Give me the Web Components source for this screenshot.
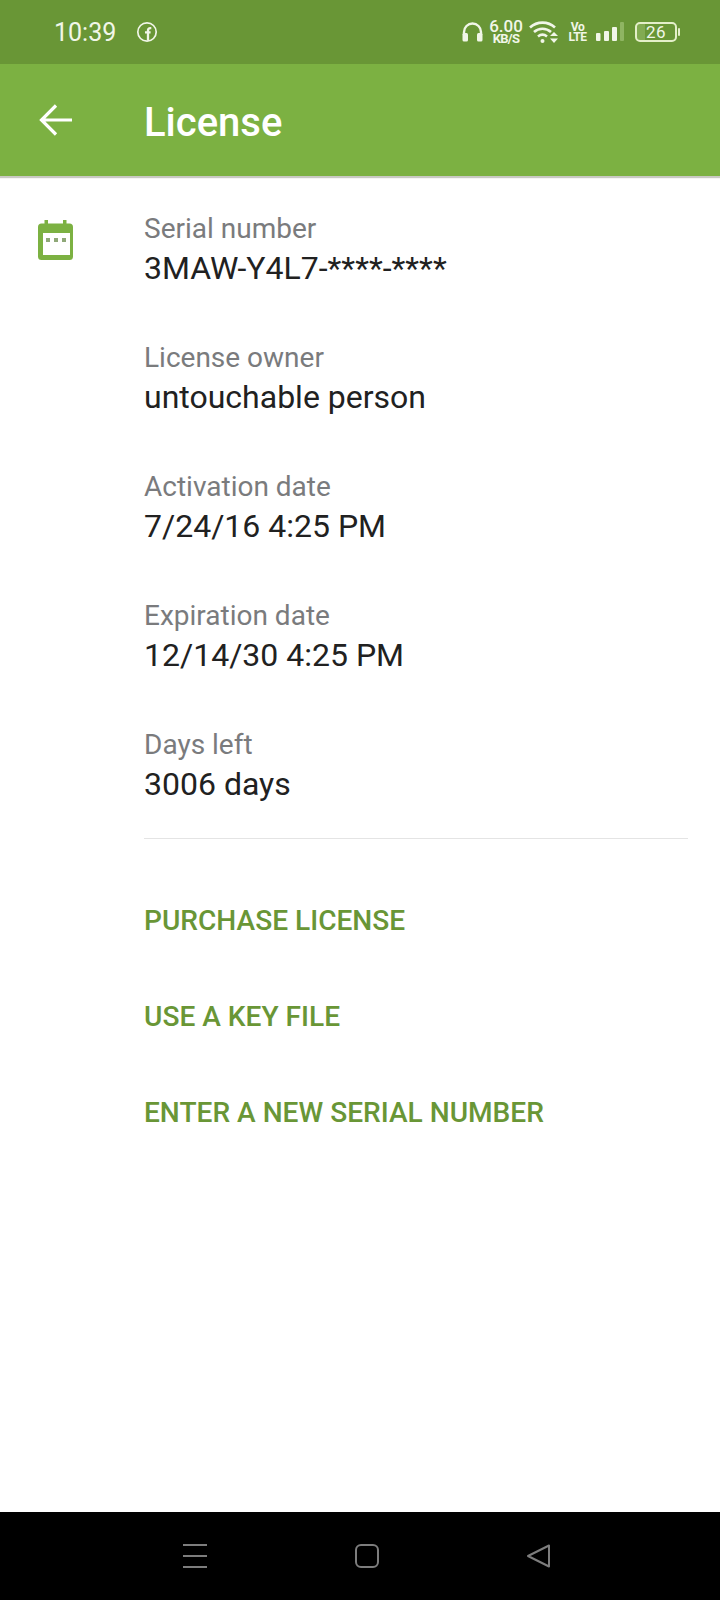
<!DOCTYPE html>
<html>
<head>
<meta charset="utf-8">
<style>
  html, body { margin: 0; padding: 0; background: #fff; }
  body { width: 720px; height: 1600px; font-family: Roboto, "Noto Sans", sans-serif; display: flex; flex-direction: column; overflow: hidden; }
</style>
</head>
<body>
<status-bar></status-bar>
<app-bar title="License"></app-bar>
<license-panel>
  <license-row label="Serial number" value="3MAW-Y4L7-****-****"></license-row>
  <license-row label="License owner" value="untouchable person"></license-row>
  <license-row label="Activation date" value="7/24/16 4:25 PM"></license-row>
  <license-row label="Expiration date" value="12/14/30 4:25 PM"></license-row>
  <license-row label="Days left" value="3006 days"></license-row>
  <action-link slot="actions">PURCHASE LICENSE</action-link>
  <action-link slot="actions">USE A KEY FILE</action-link>
  <action-link slot="actions">ENTER A NEW SERIAL NUMBER</action-link>
</license-panel>
<nav-bar></nav-bar>

<script>
class StatusBar extends HTMLElement {
  constructor() {
    super();
    this.attachShadow({ mode: 'open' });
    this.shadowRoot.innerHTML = `
      <style>
        :host { display: flex; align-items: center; height: 64px; background: #699636; color: #f1f6e8; padding: 0 40px 0 54px; flex: none; box-sizing: border-box; }
        .time { font-size: 25px; font-weight: 400; width: 82px; }
        .gap { flex: 1; }
        svg { display: block; flex: none; }
        .right { display: flex; align-items: center; }
        .speed { display: flex; flex-direction: column; align-items: center; width: 34px; margin: 0 6px; }
        .speed b { font-size: 17px; line-height: 13px; font-weight: 500; white-space: nowrap; }
        .speed i { font-style: normal; font-size: 13px; line-height: 11px; font-weight: 700; letter-spacing: -.7px; white-space: nowrap; }
        .volte { display: flex; flex-direction: column; align-items: center; font-size: 12px; line-height: 10px; font-weight: 700; width: 15px; margin: 0 11px; letter-spacing: -.5px; }
        .battery { width: 42px; height: 20px; box-sizing: border-box; border: 2px solid #e4efc9; border-radius: 5px; margin-left: 11px; display: flex; align-items: center; justify-content: center; font-size: 17px; line-height: 1; letter-spacing: .5px; background: linear-gradient(90deg, #82ab52 0 8px, transparent 8px); }
        .nub { width: 2px; height: 8px; background: #e4efc9; margin-left: 1px; border-radius: 1px; }
      </style>
      <span class="time">10:39</span>
      <svg width="22" height="22" viewBox="0 0 22 22" fill="none" stroke="#f1f6e8" stroke-width="1.7">
        <circle cx="11" cy="11" r="9.2"/>
        <path d="M12 19.500V9.500c0-1.600.8-2.400 2.400-2.400h.9M9 11.400h5.600" stroke-width="2.300"/>
      </svg>
      <span class="gap"></span>
      <div class="right">
        <svg width="21" height="20" viewBox="0 0 21 20" fill="none">
          <path d="M2 13V10a8.500 8.500 0 0 1 17 0v3" stroke="#f1f6e8" stroke-width="2.400"/>
          <rect x="0.500" y="11" width="5.500" height="8.500" rx="1.500" fill="#f1f6e8"/>
          <rect x="15" y="11" width="5.500" height="8.500" rx="1.500" fill="#f1f6e8"/>
        </svg>
        <div class="speed"><b>6.00</b><i>KB/S</i></div>
        <svg width="30" height="24" viewBox="0 0 30 24" fill="none" stroke="#f1f6e8" stroke-width="2.600">
          <path d="M1 7.500c7-6.500 18-6.500 25 0M5 12c4.800-4.300 12.200-4.300 17 0M9 16.500c2.700-2.200 6.300-2.200 9 0"/>
          <circle cx="13.500" cy="21" r="2" fill="#f1f6e8" stroke="none"/>
          <path d="M21 16h8l-4-4zM21 18.500h8l-4 4.500z" fill="#f1f6e8" stroke="none"/>
        </svg>
        <div class="volte"><span>Vo</span><span>LTE</span></div>
        <svg width="28" height="20" viewBox="0 0 28 20">
          <rect x="0" y="11" width="4.500" height="8" rx="1" fill="#f1f6e8"/>
          <rect x="8" y="9" width="5" height="10" rx="1" fill="#f1f6e8"/>
          <rect x="16" y="5" width="5" height="14" rx="1" fill="#f1f6e8"/>
          <rect x="24" y="0" width="4" height="19" rx="1" fill="#8fb562"/>
        </svg>
        <div class="battery">26</div><span class="nub"></span>
      </div>`;
  }
}

class AppBar extends HTMLElement {
  static get observedAttributes() { return ['title']; }
  constructor() {
    super();
    this.attachShadow({ mode: 'open' });
    this.render();
  }
  attributeChangedCallback() { this.render(); }
  render() {
    this.shadowRoot.innerHTML = `
      <style>
        :host { display: flex; align-items: center; flex: none; height: 112px; background: #7cb142; color: #fff; box-shadow: 0 2px 1px rgba(60,60,40,.28); position: relative; z-index: 1; }
        svg { display: block; margin-left: 38px; width: 36px; height: 36px; flex: none; }
        h1 { margin: 0 0 0 70px; padding-top: 5px; font-size: 40px; font-weight: 500; line-height: 1; }
      </style>
      <svg viewBox="0 0 36 36" fill="none" stroke="#fff" stroke-width="3.200">
        <path d="M34 18H5M18 3.500 3.500 18 18 32.500"/>
      </svg>
      <h1>${this.getAttribute('title') || ''}</h1>`;
  }
}

class LicensePanel extends HTMLElement {
  constructor() {
    super();
    this.attachShadow({ mode: 'open' });
    this.shadowRoot.innerHTML = `
      <style>
        :host { display: flex; flex: 1; background: #fff; min-height: 0; }
        .icon { width: 144px; flex: none; padding: 44px 0 0 38px; box-sizing: border-box; }
        .icon svg { display: block; width: 36px; height: 40px; }
        .main { flex: 1; padding: 32px 32px 0 0; }
        .rows { display: flex; flex-direction: column; gap: 51px; }
        hr { margin: 36px 0 0; border: 0; height: 1px; background: #e4e4e4; }
        .actions { display: flex; flex-direction: column; padding-top: 33px; }
      </style>
      <div class="icon">
        <svg viewBox="0 0 36 40">
          <rect x="6.500" y="0" width="3.500" height="6" fill="#7cb142"/>
          <rect x="25" y="0" width="3.500" height="6" fill="#7cb142"/>
          <path fill-rule="evenodd" fill="#7cb142" d="M3.500 3.500h28A3.500 3.500 0 0 1 35 7v29.500a3.500 3.500 0 0 1-3.500 3.500h-28A3.500 3.500 0 0 1 0 36.500V7a3.500 3.500 0 0 1 3.500-3.500zM5 13v22h27V13z"/>
          <path fill="#8fa878" d="M8 18h4v4H8zM16 18h4v4h-4zM24 18h4v4h-4z"/>
        </svg>
      </div>
      <div class="main">
        <div class="rows"><slot></slot></div>
        <hr>
        <div class="actions"><slot name="actions"></slot></div>
      </div>`;
  }
}

class LicenseRow extends HTMLElement {
  constructor() {
    super();
    this.attachShadow({ mode: 'open' });
    this.shadowRoot.innerHTML = `
      <style>
        :host { display: block; }
        .label { font-size: 28px; line-height: 42px; color: #7a7b7d; }
        .value { font-size: 32px; line-height: 36px; color: #212121; }
      </style>
      <div class="label">${this.getAttribute('label')}</div>
      <div class="value">${this.getAttribute('value')}</div>`;
  }
}

class ActionLink extends HTMLElement {
  constructor() {
    super();
    this.attachShadow({ mode: 'open' });
    this.shadowRoot.innerHTML = `
      <style>
        :host { display: flex; align-items: center; height: 96px; font-size: 28.1px; font-weight: 500; color: #699636; }
      </style>
      <slot></slot>`;
  }
}

class NavBar extends HTMLElement {
  constructor() {
    super();
    this.attachShadow({ mode: 'open' });
    this.shadowRoot.innerHTML = `
      <style>
        :host { display: flex; flex: none; height: 88px; background: #000; justify-content: center; align-items: flex-start; padding: 32px 0 0 14px; box-sizing: border-box; gap: 148px; }
        svg { display: block; width: 24px; height: 24px; flex: none; }
      </style>
      <svg viewBox="0 0 24 24" stroke="#7d7d7d" stroke-width="2" fill="none"><path d="M0 1h24M0 12h24M0 23h24"/></svg>
      <svg viewBox="0 0 24 24" stroke="#7d7d7d" stroke-width="2" fill="none"><rect x="1" y="1" width="22" height="22" rx="5"/></svg>
      <svg viewBox="0 0 24 24" stroke="#7d7d7d" stroke-width="2" fill="none" stroke-linejoin="round"><path d="M1 12 22 1.500v21z"/></svg>`;
  }
}

customElements.define('status-bar', StatusBar);
customElements.define('app-bar', AppBar);
customElements.define('license-panel', LicensePanel);
customElements.define('license-row', LicenseRow);
customElements.define('action-link', ActionLink);
customElements.define('nav-bar', NavBar);
</script>
</body>
</html>
